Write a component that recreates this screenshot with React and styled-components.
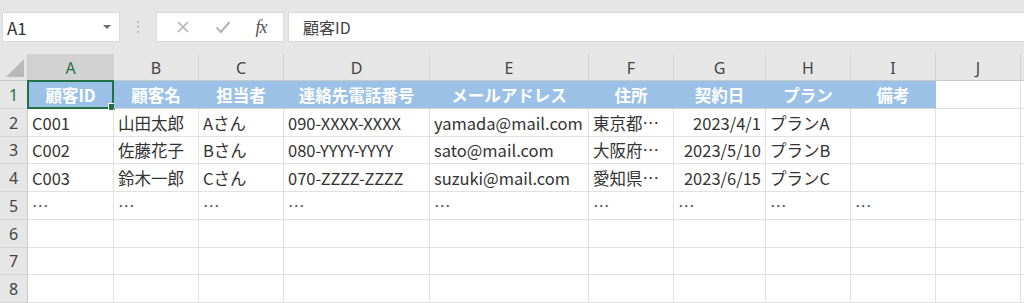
import React from "react";
import styled, { createGlobalStyle, css } from "styled-components";

const Global = createGlobalStyle`
  html, body { margin: 0; padding: 0; background: #ffffff; }
  body { font-family: "Noto Sans CJK JP", "Noto Sans", sans-serif; }
  * { box-sizing: border-box; }
`;

const Page = styled.div`
  width: 1024px;
  height: 303px;
  overflow: hidden;
  background: #ffffff;
  display: flex;
  flex-direction: column;
`;

const FormulaBar = styled.div`
  height: 54px;
  background: #e6e6e6;
  display: flex;
  align-items: flex-start;
  padding: 12px 0 0 2px;
`;

const NameBox = styled.div`
  width: 118px;
  height: 30px;
  background: #ffffff;
  border: 1px solid #dadada;
  display: flex;
  align-items: center;
  justify-content: space-between;
  padding: 0 8px 0 4px;
  font-size: 17px;
  color: #333333;
`;

const Caret = styled.span`
  width: 0;
  height: 0;
  border-left: 4px solid transparent;
  border-right: 4px solid transparent;
  border-top: 4px solid #6b6b6b;
`;

const Dots = styled.div`
  width: 36px;
  height: 30px;
  display: flex;
  flex-direction: column;
  align-items: center;
  justify-content: center;
  gap: 3px;
  span {
    width: 2px;
    height: 2px;
    background: #b0b0b0;
    border-radius: 1px;
  }
`;

const ActionBox = styled.div`
  width: 128px;
  height: 30px;
  background: #ffffff;
  border: 1px solid #dadada;
  display: flex;
  align-items: center;
  justify-content: space-around;
  padding: 0 4px 0 6px;
`;

const Fx = styled.span`
  font-family: "Liberation Serif", "DejaVu Serif", serif;
  font-style: italic;
  font-size: 18px;
  color: #555555;
  letter-spacing: -1px;
`;

const FormulaInput = styled.div`
  flex: 1;
  margin-left: 4px;
  height: 30px;
  background: #ffffff;
  border: 1px solid #dadada;
  border-right: none;
  display: flex;
  align-items: center;
  padding-left: 14px;
  font-size: 16px;
  color: #444444;
`;

const Sheet = styled.div`
  display: grid;
  grid-template-columns: 28px 86px 85px 85px 146px 159px 85px 92px 85px 85px 85px 1fr;
  grid-template-rows: 27px 28px 28px 27px 28px 28px 28px 27px 28px;
`;

const Corner = styled.div`
  background: #e6e6e6;
  border-right: 1px solid #c8c8c8;
  border-bottom: 1px solid #c8c8c8;
  position: relative;
  &::after {
    content: "";
    position: absolute;
    right: 3px;
    bottom: 3px;
    width: 0;
    height: 0;
    border-left: 18px solid transparent;
    border-bottom: 18px solid #b9b9b9;
  }
`;

const ColHead = styled.div`
  background: ${(p) => (p.$active ? "#d2d2d2" : "#e6e6e6")};
  border-right: 1px solid #d0d0d0;
  border-bottom: 1px solid ${(p) => (p.$active ? "#217346" : "#c8c8c8")};
  display: flex;
  align-items: center;
  justify-content: center;
  font-family: "Noto Sans", "Noto Sans CJK JP", sans-serif;
  font-size: 16px;
  color: ${(p) => (p.$active ? "#217346" : "#444444")};
  padding-top: 1px;
`;

const RowHead = styled.div`
  background: #e6e6e6;
  border-right: 1px solid #c8c8c8;
  border-bottom: 1px solid #d4d4d4;
  display: flex;
  align-items: center;
  justify-content: center;
  font-family: "Noto Sans", "Noto Sans CJK JP", sans-serif;
  font-size: 16px;
  color: ${(p) => (p.$active ? "#217346" : "#444444")};
`;

const Cell = styled.div`
  position: relative;
  display: flex;
  align-items: center;
  white-space: nowrap;
  overflow: visible;
  font-size: 16.5px;
  color: #333333;
  padding: 0 4px;
  border-right: 1px solid #e1e1e1;
  border-bottom: 1px solid #e1e1e1;
  justify-content: ${(p) => (p.$align === "right" ? "flex-end" : "flex-start")};
  ${(p) =>
    p.$head &&
    css`
      background: #9bc2e6;
      color: #ffffff;
      font-weight: 700;
      justify-content: center;
      border-right-color: #9bc2e6;
      border-bottom-color: #d4d4d4;
    `}
`;

const Dim = styled.span`
  color: #555555;
  letter-spacing: 1px;
`;

const Selection = styled.div`
  position: absolute;
  left: -1px;
  top: -1px;
  right: -1px;
  bottom: -1px;
  border: 2px solid #217346;
  pointer-events: none;
  &::after {
    content: "";
    position: absolute;
    right: -4px;
    bottom: -4px;
    width: 6px;
    height: 6px;
    background: #217346;
    border: 1px solid #ffffff;
  }
`;

const columns = ["A", "B", "C", "D", "E", "F", "G", "H", "I", "J"];
const headers = ["顧客ID", "顧客名", "担当者", "連絡先電話番号", "メールアドレス", "住所", "契約日", "プラン", "備考"];
const rows = [
  ["C001", "山田太郎", "Aさん", "090-XXXX-XXXX", "yamada@mail.com", "東京都…", "2023/4/1", "プランA", ""],
  ["C002", "佐藤花子", "Bさん", "080-YYYY-YYYY", "sato@mail.com", "大阪府…", "2023/5/10", "プランB", ""],
  ["C003", "鈴木一郎", "Cさん", "070-ZZZZ-ZZZZ", "suzuki@mail.com", "愛知県…", "2023/6/15", "プランC", ""],
  ["…", "…", "…", "…", "…", "…", "…", "…", "…"],
];

const XIcon = () => (
  <svg width="14" height="14" viewBox="0 0 14 14">
    <path d="M2 2 L12 12 M12 2 L2 12" stroke="#b3b3b3" strokeWidth="1.6" fill="none" />
  </svg>
);

const CheckIcon = () => (
  <svg width="16" height="14" viewBox="0 0 16 14">
    <path d="M1.5 7.5 L6 12 L14.5 2" stroke="#b3b3b3" strokeWidth="2" fill="none" />
  </svg>
);

export default function App() {
  return (
    <Page>
      <Global />
      <FormulaBar>
        <NameBox>
          <span>A1</span>
          <Caret />
        </NameBox>
        <Dots>
          <span />
          <span />
          <span />
        </Dots>
        <ActionBox>
          <XIcon />
          <CheckIcon />
          <Fx>fx</Fx>
        </ActionBox>
        <FormulaInput>顧客ID</FormulaInput>
      </FormulaBar>
      <Sheet>
        <Corner />
        {columns.map((c) => (
          <ColHead key={c} $active={c === "A"}>
            {c}
          </ColHead>
        ))}
        <ColHead />

        <RowHead $active>1</RowHead>
        {headers.map((h, i) => (
          <Cell key={h} $head>
            {h}
            {i === 0 && <Selection />}
          </Cell>
        ))}
        <Cell />
        <Cell />

        {rows.map((r, ri) => (
          <React.Fragment key={ri}>
            <RowHead>{ri + 2}</RowHead>
            {r.map((v, ci) => (
              <Cell key={ci} $align={ci === 6 && v !== "…" ? "right" : "left"}>
                {v === "…" ? <Dim>…</Dim> : v}
              </Cell>
            ))}
            <Cell />
            <Cell />
          </React.Fragment>
        ))}

        {[6, 7, 8].map((n) => (
          <React.Fragment key={n}>
            <RowHead>{n}</RowHead>
            {columns.map((c) => (
              <Cell key={c} />
            ))}
            <Cell />
          </React.Fragment>
        ))}
      </Sheet>
    </Page>
  );
}
